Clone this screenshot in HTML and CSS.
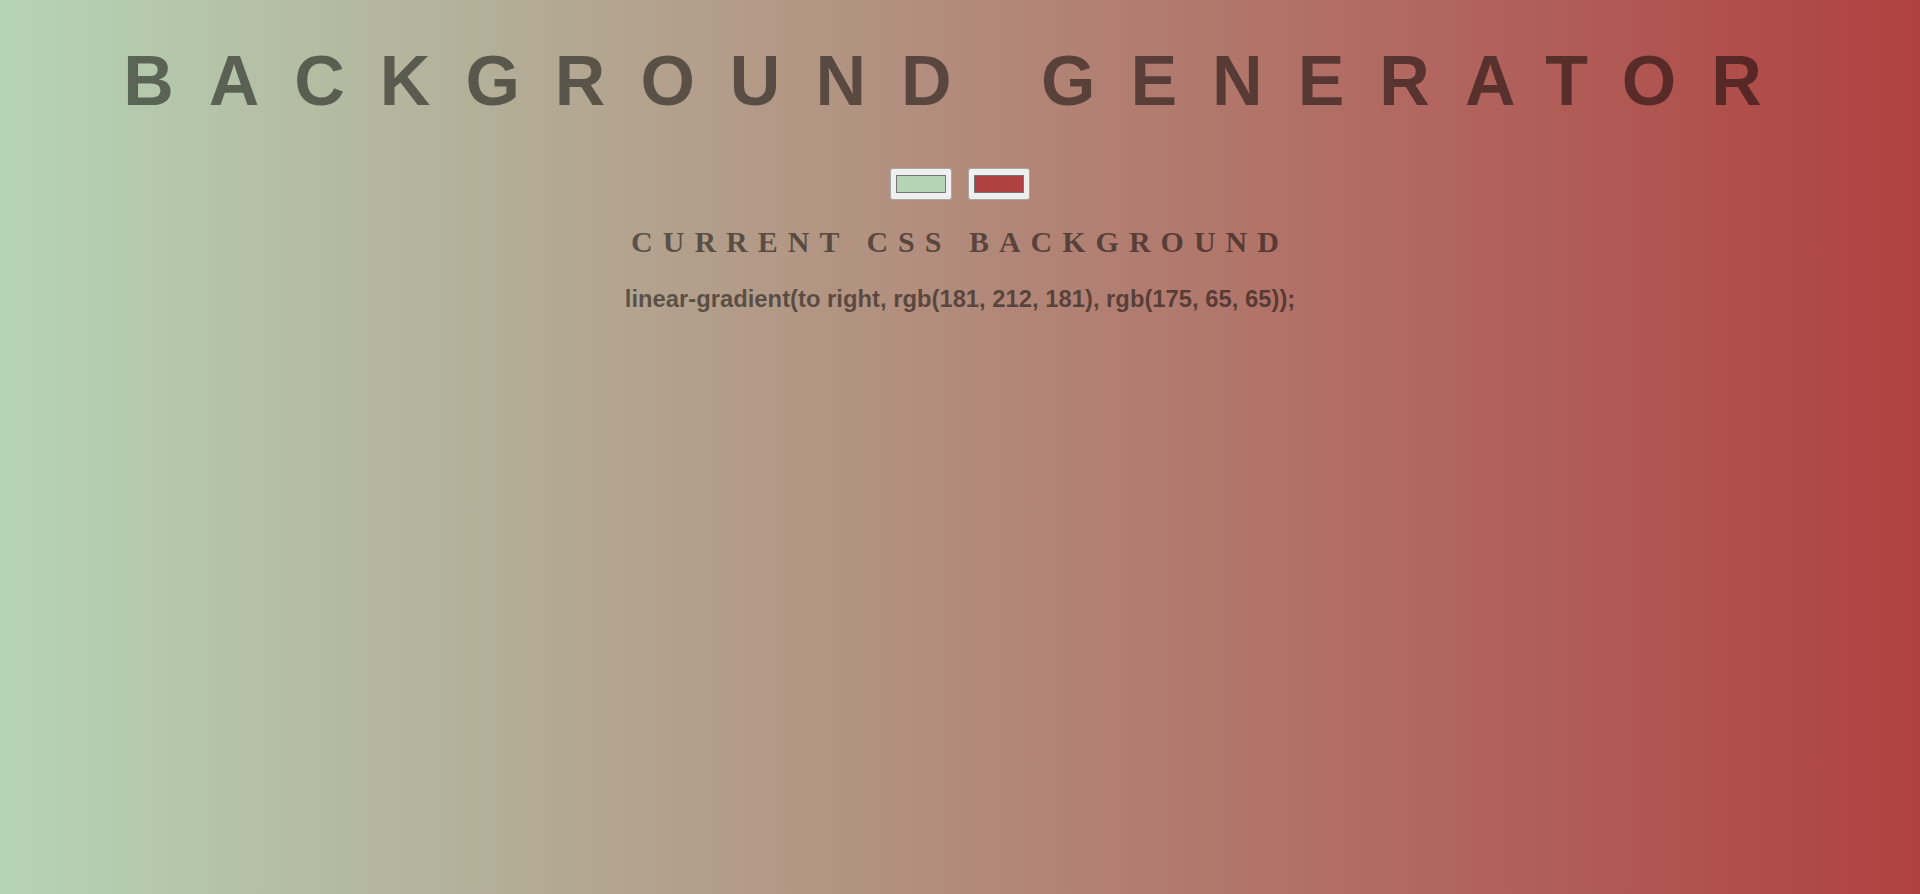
FILE: index.html
```
<!DOCTYPE html>
<html lang="en">
<head>
<meta charset="utf-8">
<title>Background Generator</title>
<link rel="stylesheet" href="styles.css">
</head>
<body class="page">
  <h1 class="title">Background Generator</h1>
  <div class="pickers">
    <input class="picker" type="color" name="color1" value="#b5d4b5">
    <input class="picker" type="color" name="color2" value="#af4141">
  </div>
  <h3 class="subtitle">Current CSS Background</h3>
  <p class="code">linear-gradient(to right, rgb(181, 212, 181), rgb(175, 65, 65));</p>
</body>
</html>
```
FILE: styles.css
```
html {
  min-height: 100%;
}

.page {
  margin: 0;
  min-height: 100vh;
  background: linear-gradient(to right, rgb(181, 212, 181), rgb(175, 65, 65));
  text-align: center;
  color: rgba(0, 0, 0, 0.5);
  font-family: "Liberation Serif", "Times New Roman", serif;
  overflow: hidden;
}

.title {
  margin: 41px 0 47px;
  font-family: "Liberation Sans", Arial, sans-serif;
  font-weight: 700;
  font-size: 70px;
  line-height: normal;
  letter-spacing: 35px;
  text-transform: uppercase;
  color: rgba(0, 0, 0, 0.5);
}

.pickers {
  display: flex;
  justify-content: center;
  gap: 16px;
}

.picker {
  -webkit-appearance: none;
  appearance: none;
  width: 62px;
  height: 32px;
  margin: 0;
  padding: 0;
  border: 1px solid #a9a9a9;
  border-radius: 3px;
  background: #efefef;
  box-sizing: border-box;
  cursor: pointer;
}

.picker::-webkit-color-swatch-wrapper {
  padding: 6px 5px;
}

.picker::-webkit-color-swatch {
  border: 1px solid #777777;
  border-radius: 0;
}

.subtitle {
  margin: 25px 0 26px;
  font-family: "Liberation Serif", "Times New Roman", serif;
  font-weight: 700;
  font-size: 30px;
  line-height: normal;
  letter-spacing: 10px;
  text-transform: uppercase;
  color: rgba(0, 0, 0, 0.5);
}

.code {
  margin: 0;
  font-family: "Liberation Sans", Arial, sans-serif;
  font-weight: 700;
  font-size: 23.8px;
  line-height: normal;
  color: rgba(0, 0, 0, 0.5);
}
```
